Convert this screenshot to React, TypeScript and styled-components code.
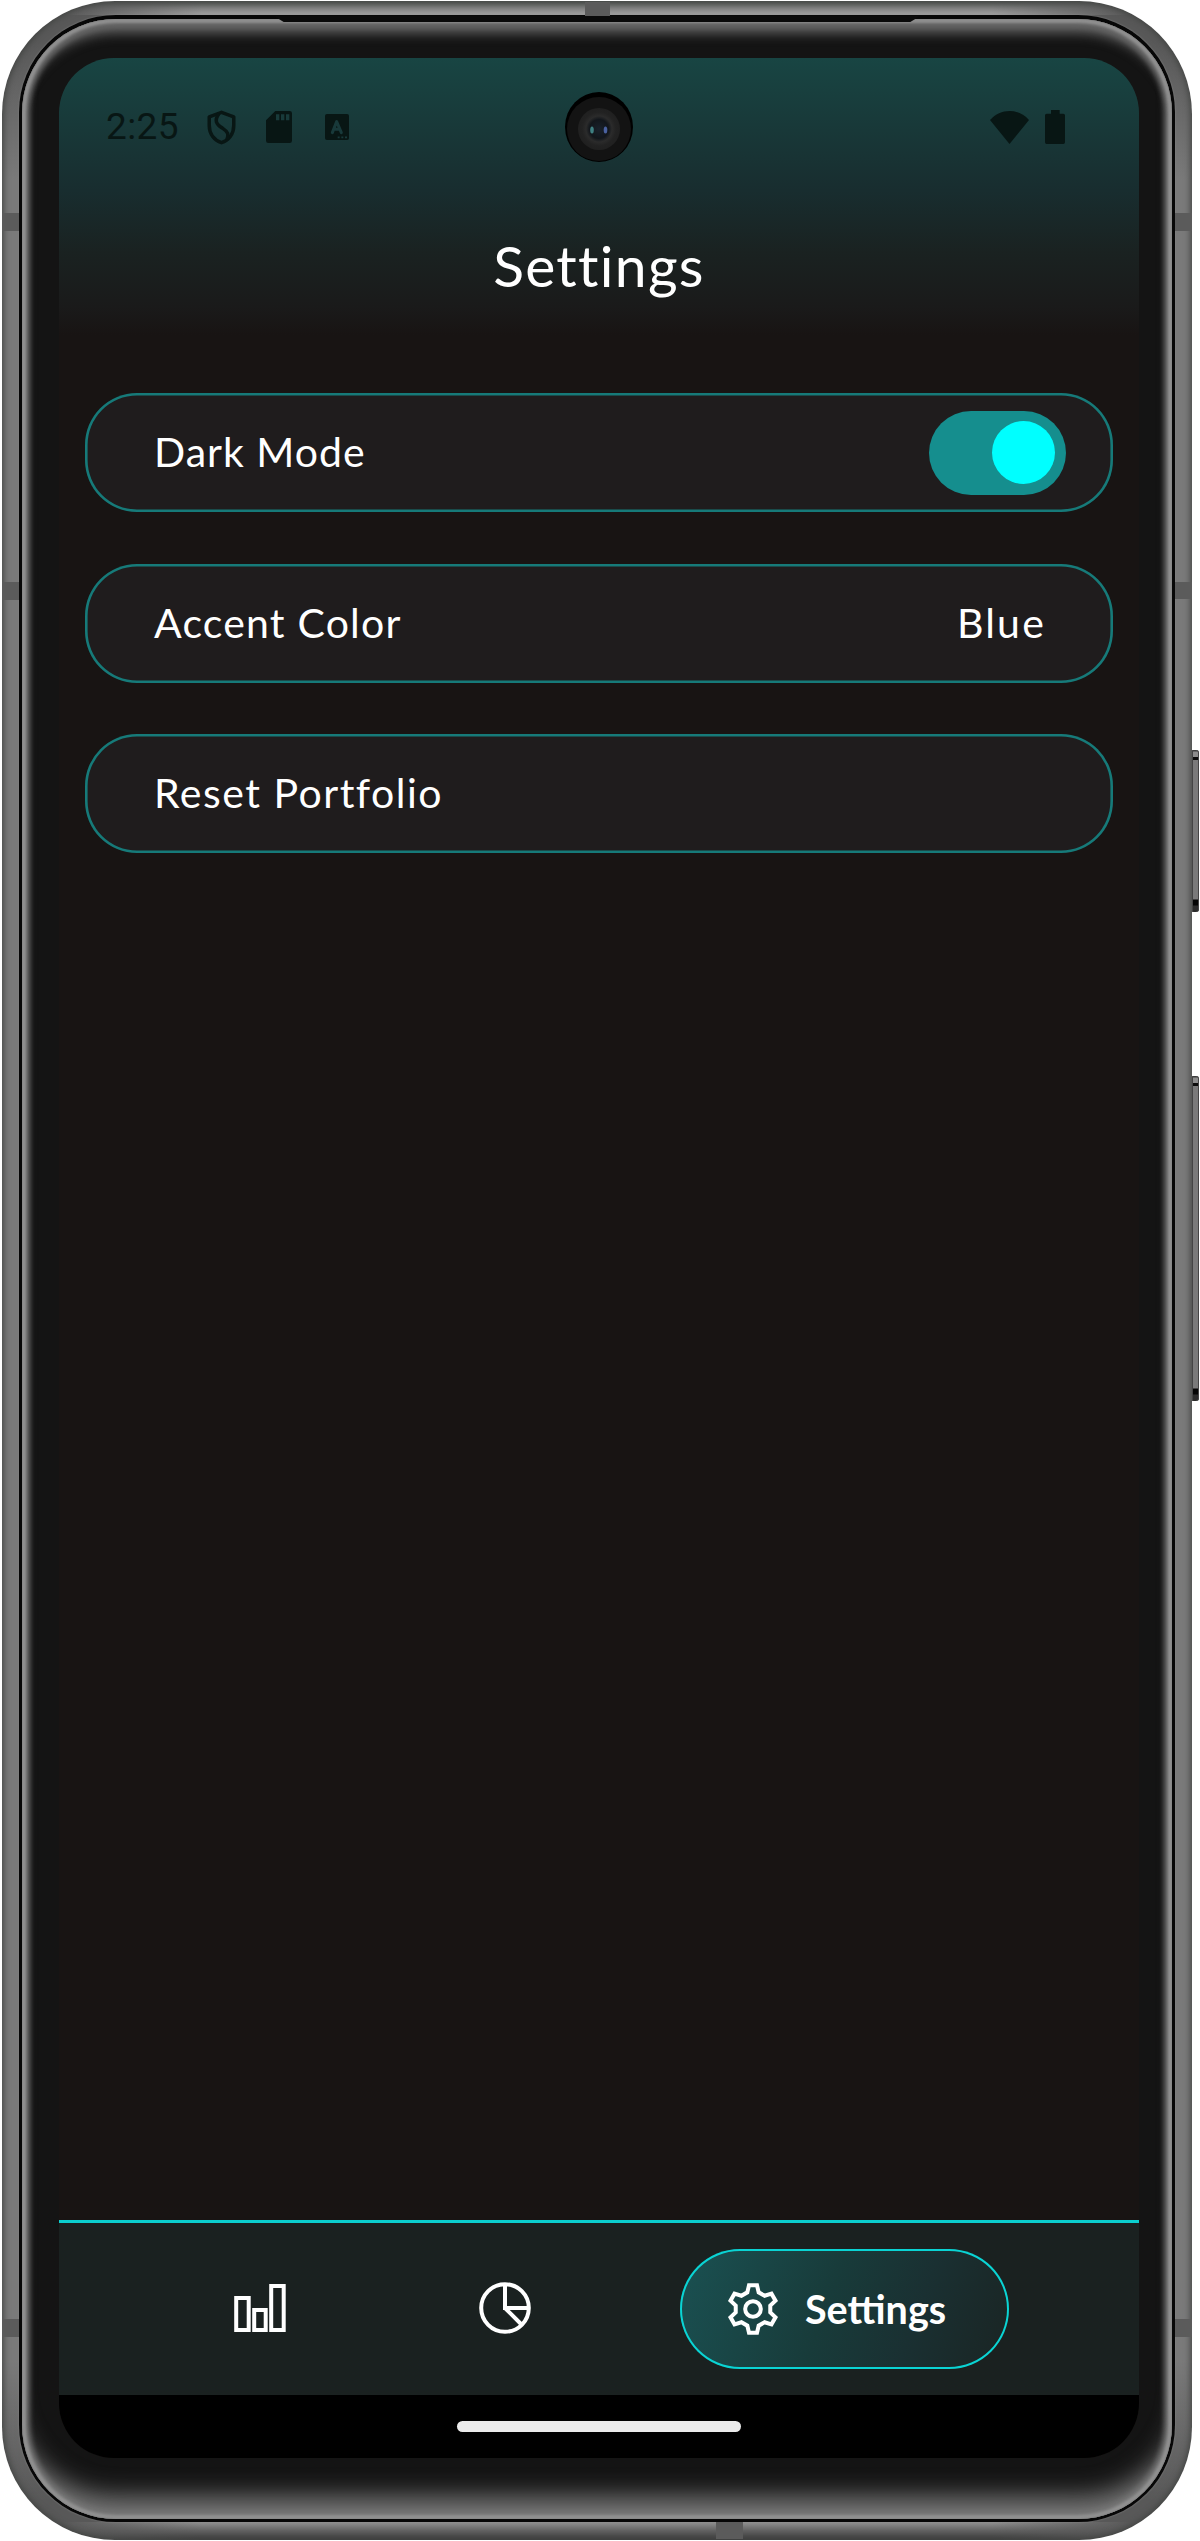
import React from "react";
import styled, { createGlobalStyle } from "styled-components";

const GlobalStyle = createGlobalStyle`
  *, *::before, *::after { box-sizing: border-box; }
  body { margin: 0; background: #fff; }
`;

const Stage = styled.div`
  position: relative;
  width: 1200px;
  height: 2541px;
  padding: 1px 8px 1px 2px;
  overflow: hidden;
  background: #fff;
`;

const cornerFade =
  "linear-gradient(90deg, #585858 60px, transparent 200px, transparent calc(100% - 200px), #585858 calc(100% - 60px))";

const Metal = styled.div`
  height: 2539px;
  padding: 14px 17px 18px;
  border-radius: 113px;
  background:
    ${cornerFade} top / 100% 14px no-repeat,
    ${cornerFade} bottom / 100% 18px no-repeat,
    linear-gradient(#555a57, #858585 8px, #a0a0a0 14px) top / 100% 14px no-repeat,
    linear-gradient(#929292, #606060 9px, #3c3c3c) bottom / 100% 18px no-repeat,
    linear-gradient(#585858 40px, #7a7a7a 180px, #7a7a7a calc(100% - 180px), #585858 calc(100% - 40px));
  box-shadow: inset 0 0 6px 1.5px #414341;
`;

const Seam = styled.div`
  height: 2507px;
  padding: 4px 3px 3px;
  border-radius: 97px;
  background: #070707;
  box-shadow: 0 0 2px 0 #8a8a8a;
`;

const Bezel = styled.div`
  height: 2500px;
  padding: 39px 33px 61px 37px;
  border-radius: 94px;
  background: #141414;
  box-shadow:
    inset 0 0 2px 0 #707070,
    inset 0 0 3px 4px #939393,
    inset 0 23px 12px -9px #636363,
    inset 0 -35px 24px -12px #757575,
    inset 0 0 5px 8px #686868;
`;

const Screen = styled.div`
  position: relative;
  display: flex;
  flex-direction: column;
  width: 1080px;
  height: 2400px;
  border-radius: 55px;
  overflow: hidden;
  background: #181413;
  color: #fff;
  font-family: Lato, "Open Sans", sans-serif;
`;

const Header = styled.header`
  display: flex;
  flex-direction: column;
  height: 277px;
  background: linear-gradient(#184543 0%, #182d2f 48%, #1a2221 70%, #1a1a1a 90%, #181413 100%);
`;

const StatusBar = styled.div`
  display: flex;
  align-items: center;
  justify-content: space-between;
  height: 138px;
  padding: 0 74px 0 47px;
  color: #081614;
`;

const StatusGroup = styled.div<{ $gap: number }>`
  display: flex;
  align-items: center;
  gap: ${(p) => p.$gap}px;
  svg { display: block; }
  svg:nth-child(4) { margin-left: 3px; }
`;

const Clock = styled.span`
  width: 71px;
  font: 400 37px/44px Roboto, sans-serif;
  letter-spacing: 0.4px;
  white-space: nowrap;
`;

const Title = styled.h1`
  margin: 34px 0 0;
  text-align: center;
  font-size: 57px;
  line-height: 70px;
  font-weight: 400;
  letter-spacing: 1.3px;
`;

const Camera = styled.div`
  position: absolute;
  left: 506px;
  top: 34px;
  display: grid;
  place-items: center;
  width: 68px;
  height: 70px;
  padding-top: 4px;
  border-radius: 50%;
  background: #000;
`;

const Content = styled.main`
  display: flex;
  flex: 1;
  flex-direction: column;
  gap: 51.5px;
  padding: 58px 26px 0;
`;

const Row = styled.div`
  display: flex;
  align-items: center;
  justify-content: space-between;
  height: 119px;
  padding: 0 45px 0 69px;
  border-radius: 52px;
  background: #1f1c1d;
  box-shadow: inset 0 0 0 2.6px #167a79;
`;

const Label = styled.span<{ $track?: number }>`
  padding-bottom: 1px;
  font-size: 41px;
  line-height: 50px;
  letter-spacing: ${(p) => p.$track ?? 1}px;
`;

const Value = styled(Label)`
  padding-right: 22px;
`;

const Toggle = styled.div`
  display: flex;
  align-items: center;
  justify-content: flex-end;
  width: 137px;
  height: 84px;
  margin-right: 2px;
  padding-right: 11px;
  border-radius: 42px;
  background: #158e8e;
`;

const Knob = styled.div`
  width: 63px;
  height: 63px;
  border-radius: 50%;
  background: #0ff;
`;

const Nav = styled.nav`
  display: flex;
  align-items: flex-start;
  height: 175px;
  padding: 26px 0 0 174px;
  border-top: 3px solid #0bcfcf;
  background: #1a2120;
`;

const NavItem = styled.div<{ $width: number }>`
  display: flex;
  align-items: center;
  width: ${(p) => p.$width}px;
  height: 118px;
`;

const NavPill = styled.div`
  display: flex;
  align-items: center;
  gap: 25px;
  width: 329px;
  height: 120px;
  padding-left: 46px;
  border-radius: 60px;
  background: linear-gradient(110deg, #1a4f50 4%, #183b3a 45%, #1a3032 70%, #1a2524 98%);
  box-shadow: inset 0 0 0 2px #0ad4d4;
`;

const NavText = styled.span`
  font-size: 39.5px;
  line-height: 48px;
  font-weight: 700;
`;

const Gesture = styled.div`
  display: flex;
  justify-content: center;
  height: 63px;
  padding-top: 26px;
  background: #000;
`;

const GestureBar = styled.div`
  width: 284px;
  height: 11px;
  border-radius: 6px;
  background: #ebebeb;
`;

const SpeakerSlot = styled.div`
  position: absolute;
  left: 274px;
  top: 16px;
  width: 646px;
  height: 6px;
  background: #0a0a0a;
  clip-path: polygon(0 0, 100% 0, 98.5% 100%, 1.5% 100%);
`;

const Antenna = styled.div<{ $x: number; $y: number; $w: number; $h: number }>`
  position: absolute;
  left: ${(p) => p.$x}px;
  top: ${(p) => p.$y}px;
  width: ${(p) => p.$w}px;
  height: ${(p) => p.$h}px;
  background: #5b5b5b;
`;

const SideKey = styled.div<{ $y: number; $h: number }>`
  position: absolute;
  left: 1192px;
  top: ${(p) => p.$y}px;
  width: 7px;
  height: ${(p) => p.$h}px;
  border-radius: 1px 3px 3px 1px;
  background: linear-gradient(
    #3c3c3c 0 1px, #8d8d8d 2px 7px, #0c0c0c 7px 10px,
    #7a7a7a 10px calc(100% - 13px), #050505 calc(100% - 12px) calc(100% - 7px),
    #2c2c2c calc(100% - 6px) 100%
  );
  box-shadow: inset -1px 0 0 #444, inset 1px 0 0 #444;
`;

const ShieldIcon = () => (
  <svg width="29" height="35" viewBox="0 0 90 108" fill="none" stroke="currentColor" strokeWidth="11" strokeLinejoin="round">
    <path d="M45 7 L83 21 V48 C83 76 66 94 45 101 C24 94 7 76 7 48 V21 Z" />
    <path d="M37 11 C22 32 28 44 48 56 C66 68 68 76 62 92" />
  </svg>
);

const SdIcon = () => (
  <svg width="26" height="32" viewBox="0 0 78 96">
    <path
      fill="currentColor"
      fillRule="evenodd"
      d="M28 0H71a7 7 0 0 1 7 7V89a7 7 0 0 1-7 7H7a7 7 0 0 1-7-7V28ZM30 10V28H40V10ZM45 10V28H55V10ZM60 10V28H70V10Z"
    />
  </svg>
);

const AutoIcon = () => (
  <svg width="24" height="26" viewBox="0 0 72 78">
    <rect width="72" height="78" rx="6" fill="currentColor" />
    <path d="M22 56 L35 23 L49 56 M27 46 H44" fill="none" stroke="#18393a" strokeWidth="9" strokeLinecap="round" strokeLinejoin="round" />
    <path d="M38 70h6M49 70h6M60 70h6" stroke="#18393a" strokeWidth="5" />
  </svg>
);

const WifiIcon = () => (
  <svg width="39" height="33" viewBox="0 0 117 99">
    <path d="M0 27 C32 -9 85 -9 117 27 L58.500 99 Z" fill="currentColor" />
  </svg>
);

const BatteryIcon = () => (
  <svg width="20" height="34" viewBox="0 0 60 102">
    <path d="M18 0H44V11H55a5 5 0 0 1 5 5V97a5 5 0 0 1-5 5H5a5 5 0 0 1-5-5V16a5 5 0 0 1 5-5H18Z" fill="currentColor" />
  </svg>
);

const Lens = () => (
  <svg width="64" height="64" viewBox="0 0 64 64">
    <defs>
      <radialGradient id="glass">
        <stop offset="0" stopColor="#19212b" />
        <stop offset="0.45" stopColor="#12161b" />
        <stop offset="0.62" stopColor="#2b2b2b" />
        <stop offset="0.8" stopColor="#222" />
        <stop offset="1" stopColor="#202020" />
      </radialGradient>
    </defs>
    <circle cx="32" cy="32" r="32" fill="#131313" />
    <circle cx="32" cy="32" r="21" fill="url(#glass)" />
    <ellipse cx="25" cy="33" rx="1.800" ry="3.500" fill="#3f8082" />
    <ellipse cx="38.500" cy="33" rx="1.800" ry="3.500" fill="#4a61a0" />
  </svg>
);

const BarsIcon = () => (
  <svg width="54" height="54" viewBox="0 0 54 54" fill="none" stroke="#fff" strokeWidth="4">
    <rect x="3.200" y="17" width="12.500" height="32" />
    <rect x="21.200" y="29" width="11.500" height="20" />
    <rect x="38.200" y="5" width="12.500" height="44" />
  </svg>
);

const PieIcon = () => (
  <svg width="54" height="54" viewBox="0 0 54 54" fill="none" stroke="#fff" strokeWidth="4">
    <circle cx="27" cy="27" r="23.800" />
    <path d="M27 3V27H51M27 27L44 44" />
  </svg>
);

const TEETH = [0, 60, 120, 180, 240, 300];
const toothPoints = TEETH.flatMap((deg) => {
  const a = (deg * Math.PI) / 180;
  return [[-17, -50], [-12, -71], [12, -71], [17, -50]].map(
    ([x, y]) =>
      `${(x * Math.cos(a) - y * Math.sin(a)).toFixed(2)},${(x * Math.sin(a) + y * Math.cos(a)).toFixed(2)}`
  );
}).join(" ");

const GearIcon = () => (
  <svg width="54" height="54" viewBox="-81 -81 162 162" fill="none" stroke="#fff" strokeWidth="12">
    <polygon points={toothPoints} />
    <circle r="23.500" />
  </svg>
);

export default function App() {
  return (
    <>
      <GlobalStyle />
      <Stage>
        <Metal>
          <Seam>
            <Bezel>
              <Screen>
                <Header>
                  <StatusBar>
                    <StatusGroup $gap={30}>
                      <Clock>2:25</Clock>
                      <ShieldIcon />
                      <SdIcon />
                      <AutoIcon />
                    </StatusGroup>
                    <StatusGroup $gap={16}>
                      <WifiIcon />
                      <BatteryIcon />
                    </StatusGroup>
                  </StatusBar>
                  <Title>Settings</Title>
                </Header>
                <Content>
                  <Row>
                    <Label $track={1}>Dark Mode</Label>
                    <Toggle role="switch" aria-checked="true">
                      <Knob />
                    </Toggle>
                  </Row>
                  <Row>
                    <Label $track={1.2}>Accent Color</Label>
                    <Value $track={2.2}>Blue</Value>
                  </Row>
                  <Row>
                    <Label $track={1.5}>Reset Portfolio</Label>
                  </Row>
                </Content>
                <Nav>
                  <NavItem $width={245}>
                    <BarsIcon />
                  </NavItem>
                  <NavItem $width={202}>
                    <PieIcon />
                  </NavItem>
                  <NavPill>
                    <GearIcon />
                    <NavText>Settings</NavText>
                  </NavPill>
                </Nav>
                <Gesture>
                  <GestureBar />
                </Gesture>
                <Camera>
                  <Lens />
                </Camera>
              </Screen>
            </Bezel>
          </Seam>
        </Metal>
        <SpeakerSlot />
        <Antenna $x={585} $y={2} $w={25} $h={14} />
        <Antenna $x={716} $y={2522} $w={27} $h={17} />
        <Antenna $x={2} $y={213} $w={17} $h={18} />
        <Antenna $x={2} $y={582} $w={17} $h={18} />
        <Antenna $x={2} $y={2319} $w={17} $h={18} />
        <Antenna $x={1175} $y={213} $w={17} $h={18} />
        <Antenna $x={1175} $y={582} $w={17} $h={17} />
        <Antenna $x={1175} $y={2319} $w={17} $h={18} />
        <SideKey $y={750} $h={162} />
        <SideKey $y={1076} $h={325} />
      </Stage>
    </>
  );
}
